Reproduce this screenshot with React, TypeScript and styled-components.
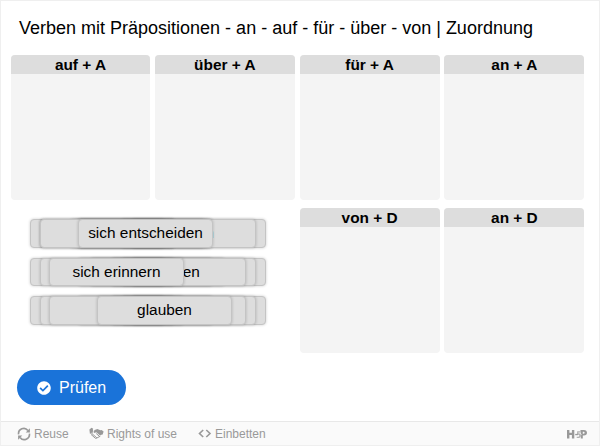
import React from "react";
import styled, { createGlobalStyle } from "styled-components";
import { FaCheckCircle } from "react-icons/fa";

const GlobalStyle = createGlobalStyle`
  * { box-sizing: border-box; }
  body { margin: 0; background: #fff; font-family: "Liberation Sans", Arial, sans-serif; color: #000; }
`;

const Frame = styled.div`
  width: 600px;
  height: 446px;
  border: 1px solid #efefef;
  display: flex;
  flex-direction: column;
`;

const Title = styled.h1`
  margin: 0;
  padding: 16px 0 0 18px;
  height: 54px;
  font-size: 18px;
  line-height: 22px;
  font-weight: 400;
  white-space: nowrap;
`;

const Board = styled.main`
  display: grid;
  grid-template-columns: 139px 140px 140px 140px;
  grid-template-rows: 145px 145px;
  row-gap: 8px;
  column-gap: 4.8px;
  padding-left: 10px;
`;

const Zone = styled.section`
  background: #f4f4f4;
  border-radius: 4px;
  overflow: hidden;
`;

const ZoneLabel = styled.h2`
  margin: 0;
  height: 19px;
  background: #ddd;
  font-size: 15.4px;
  line-height: 20px;
  font-weight: 700;
  text-align: center;
`;

const Pool = styled.div`
  grid-column: span 2;
  display: flex;
  flex-direction: column;
  gap: 10px;
  padding: 11px 0 0 19px;
`;

const Pile = styled.div`
  display: grid;
  height: 28.5px;
`;

const Card = styled.div<{ $offset: number }>`
  grid-area: 1 / 1;
  width: 135px;
  height: 28.5px;
  margin-left: ${(p) => p.$offset}px;
  border: 1px solid #c4c4c4;
  border-radius: 4px;
  background: #ddd;
  box-shadow: 0 0 3px rgba(0, 0, 0, 0.2);
  font-size: 15.4px;
  line-height: 26px;
  text-align: center;
  white-space: nowrap;
`;

const Actions = styled.div`
  padding: 17px 0 0 16px;
  flex: 1;
`;

const CheckButton = styled.button`
  display: flex;
  align-items: center;
  gap: 8px;
  width: 109px;
  height: 35px;
  padding: 0 0 0 20px;
  border: 0;
  border-radius: 18px;
  background: #1a73d9;
  color: #fff;
  font: 16px/35px "Liberation Sans", Arial, sans-serif;
`;

const Footer = styled.footer`
  display: flex;
  align-items: center;
  height: 24px;
  padding: 0 12px 0 16px;
  border-top: 1px solid #e8e8e8;
  background: #fafafa;
  color: #999;
`;

const FooterLink = styled.span<{ $width: number }>`
  display: flex;
  align-items: center;
  gap: 3px;
  width: ${(p) => p.$width}px;
  font-size: 12px;
  line-height: 24px;
  white-space: nowrap;
`;

const Brand = styled.span`
  display: flex;
  margin-left: auto;
`;

const piles: { text?: string; offset: number }[][] = [
  [
    { offset: 0 },
    { offset: 101 },
    { offset: 10 },
    { offset: 48 },
    { offset: 40 },
    { offset: 45 },
    { offset: 10 },
    { text: "denken", offset: 91 },
    { text: "sich entscheiden", offset: 48 },
  ],
  [
    { offset: 0 },
    { offset: 101 },
    { offset: 10 },
    { offset: 91 },
    { offset: 48 },
    { offset: 60 },
    { text: "hoffen", offset: 81 },
    { text: "sich erinnern", offset: 19 },
  ],
  [
    { offset: 0 },
    { offset: 101 },
    { offset: 10 },
    { offset: 91 },
    { offset: 81 },
    { offset: 48 },
    { text: "bitten", offset: 19 },
    { text: "glauben", offset: 67 },
  ],
];

const ReuseIcon = () => (
  <svg width="14" height="14" viewBox="0 0 14 14" fill="none" stroke="#999" strokeWidth="1.6">
    <path d="M1.6 7.4A5.2 5.2 0 0 1 10.9 3.5M12.4 6.6A5.2 5.2 0 0 1 3.1 10.5" />
    <path d="M12.9 1.2v4.2H8.7zM1.1 12.8V8.6h4.2z" fill="#999" stroke="none" />
  </svg>
);

const RightsIcon = () => (
  <svg width="15" height="13" viewBox="0 0 15 13" fill="none">
    <path d="M.4 2.4 2.6.8l1.6 1L2.4 6.4.9 6.8zM14.6 4.6 12.6 3l-1.3.5.9 4.3 1.5-.4z" fill="#999" />
    <path d="M5.6 3 8.4 2l3.6 1.5.6 4-1.6 1-3.7-3.2-2 .7-.9-.9z" fill="#999" />
    <path d="m2 7.4 4.5 4 1.4-.4 3.4-1.8M3.7 3 2.9 6.6l5 4.3" stroke="#999" strokeWidth="1" />
    <path d="m7.2 6.5 3.6 3.2" stroke="#999" strokeWidth="1" />
  </svg>
);

const EmbedIcon = () => (
  <svg width="14" height="9" viewBox="0 0 14 9" fill="none" stroke="#999" strokeWidth="1.6">
    <path d="M5.2 1 1.5 4.5 5.2 8M8.3 1 12 4.5 8.3 8" />
  </svg>
);

const BrandLogo = () => (
  <svg width="20" height="10" viewBox="0 0 20 10" fill="#999">
    <path d="M0 1h2.4v2.8h2.5V1h2.4v8.4H4.9V6H2.4v3.4H0z" />
    <path d="M8.2 4.9h2.7v1.3H8.2z" />
    <path d="M10.2 2.2h3.3v1.2h-2.1l-.1 1c1.6-.2 2.6.7 2.6 2.1 0 1.5-1 2.6-2.8 2.6l-1.4-.2V7.7c1.6.3 2.6-.1 2.6-1s-.9-1.2-2.4-.9z" opacity=".75" />
    <path fillRule="evenodd" d="M13.4 1h3.5c2 0 3.1 1.1 3.1 2.8s-1.1 2.8-3.1 2.8h-1.1v2.8h-2V6.6l.8-.8-.8-1.6zM15.8 2.8v2h.8c1.4 0 1.4-2 0-2z" />
  </svg>
);

const DropZone = ({ label }: { label: string }) => (
  <Zone>
    <ZoneLabel>{label}</ZoneLabel>
  </Zone>
);

export default function App() {
  return (
    <>
      <GlobalStyle />
      <Frame>
        <Title>Verben mit Präpositionen - an - auf - für - über - von | Zuordnung</Title>
        <Board>
          {["auf + A", "über + A", "für + A", "an + A"].map((label) => (
            <DropZone key={label} label={label} />
          ))}
          <Pool>
            {piles.map((cards, i) => (
              <Pile key={i}>
                {cards.map((card, j) => (
                  <Card key={j} $offset={card.offset}>
                    {card.text}
                  </Card>
                ))}
              </Pile>
            ))}
          </Pool>
          <DropZone label="von + D" />
          <DropZone label="an + D" />
        </Board>
        <Actions>
          <CheckButton>
            <FaCheckCircle size={14} />
            Prüfen
          </CheckButton>
        </Actions>
        <Footer>
          <FooterLink $width={72}>
            <ReuseIcon />
            Reuse
          </FooterLink>
          <FooterLink $width={109}>
            <RightsIcon />
            Rights of use
          </FooterLink>
          <FooterLink $width={80}>
            <EmbedIcon />
            Einbetten
          </FooterLink>
          <Brand>
            <BrandLogo />
          </Brand>
        </Footer>
      </Frame>
    </>
  );
}
